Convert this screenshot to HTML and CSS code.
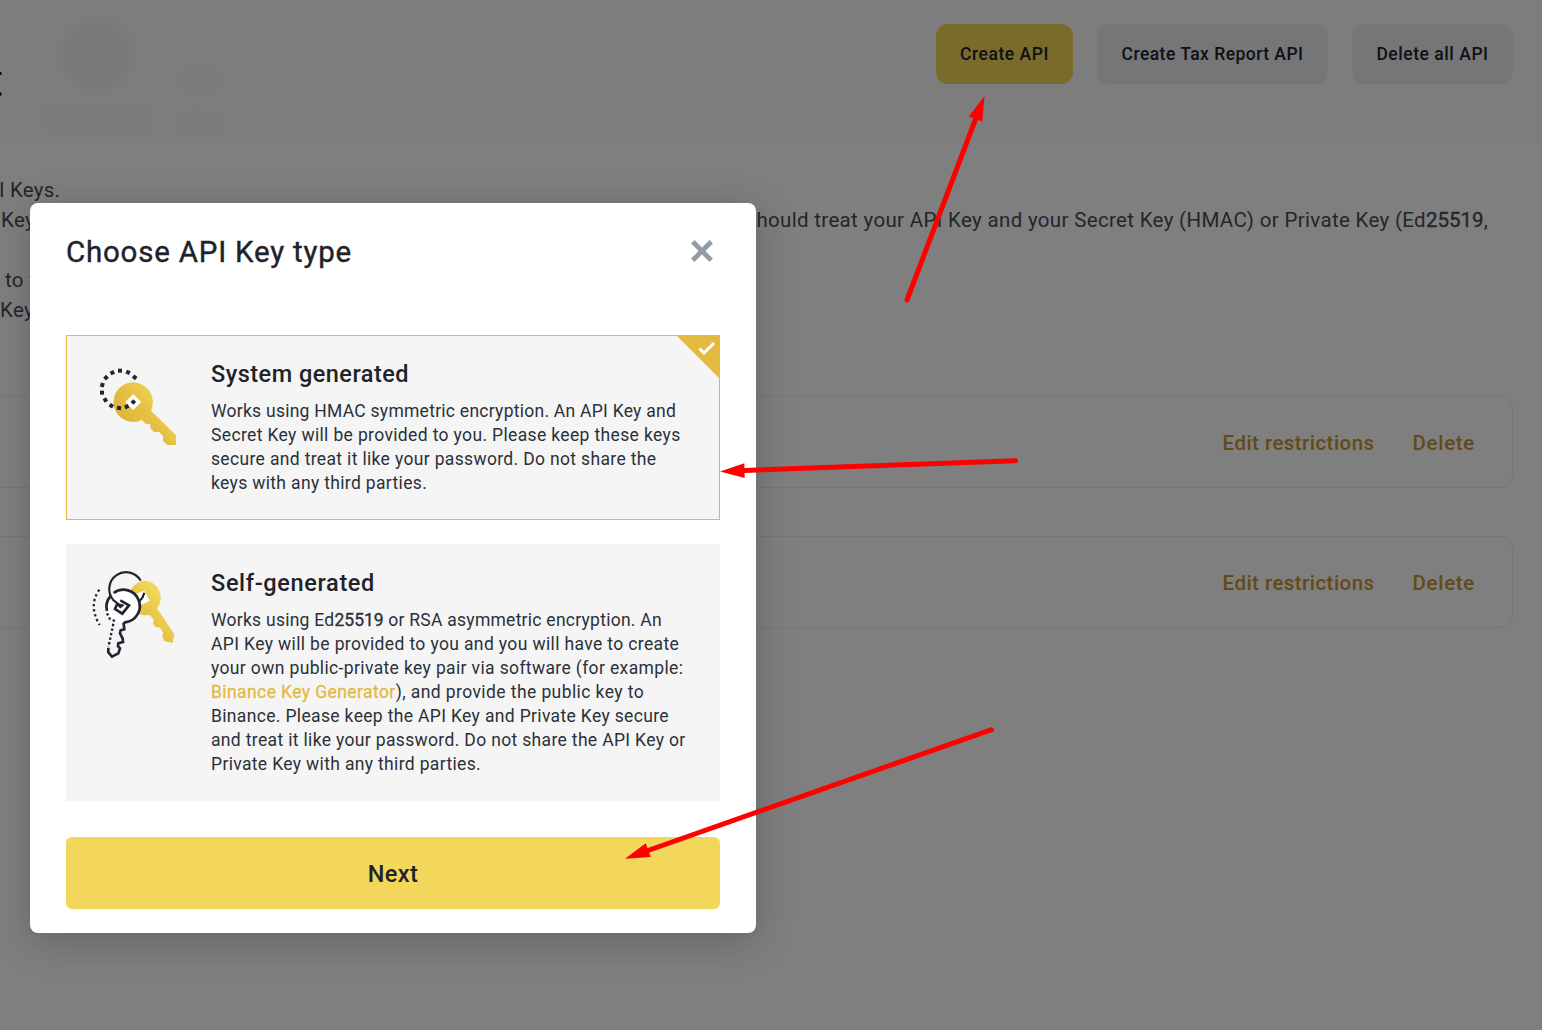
FILE: index.html
```html
<!DOCTYPE html>
<html lang="en">
<head>
<meta charset="utf-8">
<title>API Management</title>
<link rel="stylesheet" href="styles.css">
</head>
<body>
<main class="page">
  <header class="header">
    <div class="page-title"><span>t</span></div>
    <div class="ghost ghost-head"></div>
    <div class="ghost ghost-body"></div>
    <div class="ghost ghost-pill"></div>
    <div class="ghost ghost-pill low"></div>
    <div class="actions">
      <button class="btn btn-primary">Create API</button>
      <button class="btn btn-tax">Create Tax Report API</button>
      <button class="btn btn-delete">Delete all API</button>
    </div>
  </header>
  <section class="notes">
    <p class="note n1">I Keys.</p>
    <p class="note n2"><span>Key</span><span class="note-end">hould treat your API Key and your Secret Key (HMAC) or Private Key (Ed<b>25519</b>,</span></p>
    <p class="note">&nbsp;</p>
    <p class="note n4">to t</p>
    <p class="note n5">Key</p>
  </section>
  <section class="keys">
    <div class="key-row"><a>Edit restrictions</a><a class="del">Delete</a></div>
    <div class="key-row"><a>Edit restrictions</a><a class="del">Delete</a></div>
  </section>
</main>

<div class="overlay">
  <div class="modal">
    <div class="modal-head">
      <h1>Choose API Key type</h1>
      <svg class="close" viewBox="0 0 24 24"><path d="M2.8 2.8 21.2 21.2M21.2 2.8 2.8 21.2"/></svg>
    </div>
    <div class="option selected">
      <svg class="icon icon-system" viewBox="0 0 330 300">
        <defs><linearGradient id="gold" gradientUnits="userSpaceOnUse" x1="110" y1="170" x2="215" y2="85"><stop offset="0" stop-color="#dfb53b"/><stop offset=".45" stop-color="#e5bf43"/><stop offset="1" stop-color="#f0d658"/></linearGradient></defs>
        <path fill="url(#gold)" d="M160 82a59.500 59.500 0 0 1 53 85L288 241V270H261L249 258V243L237 231H222L211 220V207H197L186 195A59.500 59.500 0 1 1 160 82Z"/>
        <path fill="#fff" d="M160 117 184 141 160 165 136 141Z"/>
        <g fill="#202630">
          <rect x="-6" y="-6" width="12" height="12" transform="translate(164 67) rotate(40)"/>
          <rect x="-6" y="-6" width="12" height="12" transform="translate(144 52) rotate(25)"/>
          <rect x="-6" y="-6" width="12" height="12" transform="translate(120 47)"/>
          <rect x="-6" y="-6" width="12" height="12" transform="translate(97 53) rotate(-25)"/>
          <rect x="-6" y="-6" width="12" height="12" transform="translate(78 68) rotate(-45)"/>
          <rect x="-6" y="-6" width="12" height="12" transform="translate(67 90) rotate(15)"/>
          <rect x="-6" y="-6" width="12" height="12" transform="translate(66 113)"/>
          <rect x="-6" y="-6" width="12" height="12" transform="translate(76 135) rotate(-30)"/>
          <rect x="-6" y="-6" width="12" height="12" transform="translate(94 152) rotate(30)"/>
          <rect x="-6" y="-6" width="12" height="12" transform="translate(117 159) rotate(5)"/>
          <rect x="-6" y="-6" width="12" height="12" transform="translate(140 155) rotate(-20)"/>
          <rect x="-6" y="-6" width="12" height="12" transform="translate(160 141) rotate(45)"/>
        </g>
      </svg>
      <div class="option-text">
        <h2>System generated</h2>
        <p>
          <span class="line s28">Works using HMAC symmetric encryption. An API Key and</span>
          <span class="line s35">Secret Key will be provided to you. Please keep these keys</span>
          <span class="line">secure and treat it like your password. Do not share the</span>
          <span class="line">keys with any third parties.</span>
        </p>
      </div>
      <svg class="tick" viewBox="0 0 42 42"><path class="corner" d="M0 0H42V42Z"/><path class="check" d="M22.500 12.500 27 17 37 7"/></svg>
    </div>
    <div class="option">
      <svg class="icon icon-self" viewBox="0 0 330 330">
        <path fill="url(#gold)" d="M190 62A51 51 0 0 1 231 145L283 223 278 249 253 243 247 231 249 217 240 203 225 200 219 190 221 178 209 165A51 51 0 1 1 190 62Z"/>
        <path fill="#fff" d="M166 103 193 92 209 122 184 135Z"/>
        <path fill="none" stroke="#111" stroke-width="6" d="M193 98Q190 112 178 124"/>
        <circle fill="#fff" cx="127" cy="139" r="49"/>
        <g fill="none" stroke="#202630" stroke-width="8">
          <path stroke-width="6.500" d="M182 62A50.500 50.500 0 1 0 99 119Q111 132 128 138"/>
          <path d="M81 153A49 49 0 0 1 92 108"/>
          <path d="M101 99A49 49 0 1 1 135 187L131 191 133 208 122 211 120 220 128 236 129 246 115 250 114 259 120 265 115 280 96 290 85 277V264"/>
          <path d="M113 129 105 147 127 161 147 136 121 121"/>
          <path stroke-width="7" d="M112 132 121 141 130 134"/>
          <path stroke-width="7" stroke-dasharray="7 7" d="M81 160 90 177 102 182 85 262"/>
          <path stroke-width="7" stroke-dasharray="7 8.500" d="M58 89Q24 137 59 195"/>
        </g>
      </svg>
      <div class="option-text">
        <h2 class="self">Self-generated</h2>
        <p>
          <span class="line s28">Works using Ed<b>25519</b> or RSA asymmetric encryption. An</span>
          <span class="line s36">API Key will be provided to you and you will have to create</span>
          <span class="line s36">your own public-private key pair via software (for example:</span>
          <span class="line s41"><a>Binance Key Generator</a>), and provide the public key to</span>
          <span class="line">Binance. Please keep the API Key and Private Key secure</span>
          <span class="line">and treat it like your password. Do not share the API Key or</span>
          <span class="line">Private Key with any third parties.</span>
        </p>
      </div>
    </div>
    <button class="next">Next</button>
  </div>
</div>

<svg class="arrows" viewBox="0 0 1542 1030">
  <path class="shaft" d="M907 300 976 118M1015.500 460.700 744 470.500M991.500 729.700 648 850.500"/>
  <path class="tip" d="M984.500 96 968.800 116.500 982.300 121.500ZM720 471.500 744.300 463.200 744.700 478ZM625 858.700 645.700 843.300 650.700 857Z"/>
</svg>
</body>
</html>
```
FILE: styles.css
```css
* { box-sizing: border-box; }
html, body { margin: 0; width: 1542px; height: 1030px; overflow: hidden; }
body { position: relative; font-family: Roboto, "Liberation Sans", sans-serif; background: #fff; color: #1e2329; }
h1, h2, p { margin: 0; font-weight: 400; }
button { border: 0; font-family: inherit; color: inherit; }
b { font-weight: 400; letter-spacing: 0; -webkit-text-stroke: .35px currentColor; }

.page { height: 1030px; overflow: hidden; }
.header { position: relative; height: 144px; padding: 24px 29px 0 0; display: flex; justify-content: space-between; align-items: flex-start; background: #fafafa; }
.page-title { width: 3px; height: 76px; overflow: hidden; display: flex; justify-content: flex-end; align-items: flex-end; font-size: 45px; line-height: 50px; color: #0b0e11; }
.page-title span { margin-bottom: -6px; }
.ghost { position: absolute; background: #f0f0f0; filter: blur(5px); }
.ghost-head { left: 64px; top: 22px; width: 66px; height: 66px; border-radius: 50%; }
.ghost-body { left: 45px; top: 108px; width: 105px; height: 24px; border-radius: 20px; background: #f7f7f7; }
.ghost-pill { left: 182px; top: 71px; width: 36px; height: 18px; border-radius: 9px; background: #f3f3f3; }
.ghost-pill.low { top: 114px; background: #f7f7f7; }
.actions { display: flex; gap: 24px; }
.btn { height: 60px; border-radius: 12px; padding: 0; background: #eaecef; font-size: 17.5px; font-weight: 500; letter-spacing: .54px; }
.btn-primary { width: 137px; background: #f0d658; }
.btn-tax { width: 231px; letter-spacing: .467px; }
.btn-delete { width: 161px; }

.notes { padding: 31px 0 0; color: #474d57; font-size: 20.5px; line-height: 30px; letter-spacing: .33px; }
.note { display: flex; justify-content: space-between; white-space: pre; }
.n1 { margin-left: -1px; letter-spacing: .2px; }
.n2 { padding: 0 54px 0 1px; }
.n4 { padding-left: 5px; }
.keys { margin-top: 71px; display: grid; gap: 48px; }
.key-row { height: 92px; width: 1541px; margin-left: -28px; padding: 1px 37px 0 0; border: 1px solid #eaecef; border-radius: 12px; display: flex; justify-content: flex-end; align-items: center; gap: 38px; color: #c9942f; font-size: 20.5px; font-weight: 500; letter-spacing: .45px; }
.key-row .del { letter-spacing: .68px; }

.overlay { position: absolute; inset: 0; padding: 203px 0 0 30px; background: rgba(0, 0, 0, .5); }
.modal { width: 726px; height: 730px; padding: 24px 36px; background: #fff; border-radius: 8px; box-shadow: 0 8px 36px rgba(24, 26, 32, .26); }
.modal-head { height: 108px; display: flex; justify-content: space-between; align-items: flex-start; }
h1 { padding-top: 1px; font-size: 29.5px; line-height: 48px; letter-spacing: .78px; -webkit-text-stroke: .4px currentColor; }
.close { width: 24px; height: 24px; margin: 12px 6px 0 0; }
.close path { stroke: #929aa5; stroke-width: 4.800; fill: none; }
.option { position: relative; display: flex; gap: 21px; padding-left: 14px; background: #f5f5f5; height: 257px; }
.option.selected { height: 185px; margin-bottom: 24px; padding-left: 13px; border: 1px solid #e3ba3f; }
.icon { flex: none; width: 110px; }
.icon-system { height: 100px; margin-top: 19px; }
.icon-self { height: 110px; margin-top: 16px; }
.option-text { padding-top: 25px; }
.selected .option-text { padding-top: 24px; }
h2 { margin-bottom: 11px; font-size: 23.5px; line-height: 28px; font-weight: 500; letter-spacing: .48px; }
h2.self { letter-spacing: .65px; }
.option p { font-size: 17.5px; line-height: 24px; letter-spacing: .34px; color: #2b3139; }
.option a { color: #e3ba3f; -webkit-text-stroke: .3px currentColor; }
.line { display: block; white-space: nowrap; }
.s28 { letter-spacing: .26px; }
.s35 { letter-spacing: .354px; }
.s36 { letter-spacing: .364px; }
.s41 { letter-spacing: .41px; }
.tick { position: absolute; top: 0; right: 0; width: 42px; height: 42px; }
.corner { fill: #e3ba3f; }
.check { fill: none; stroke: #fff; stroke-width: 3; }
.next { display: block; width: 100%; height: 72px; margin-top: 36px; padding: 2px 0 0; border-radius: 6px; background: #f2d75a; font-size: 23.5px; font-weight: 500; letter-spacing: .4px; }

.arrows { position: absolute; inset: 0; width: 1542px; height: 1030px; }
.shaft { fill: none; stroke: #f00; stroke-width: 5; stroke-linecap: round; }
.tip { fill: #f00; }
```
